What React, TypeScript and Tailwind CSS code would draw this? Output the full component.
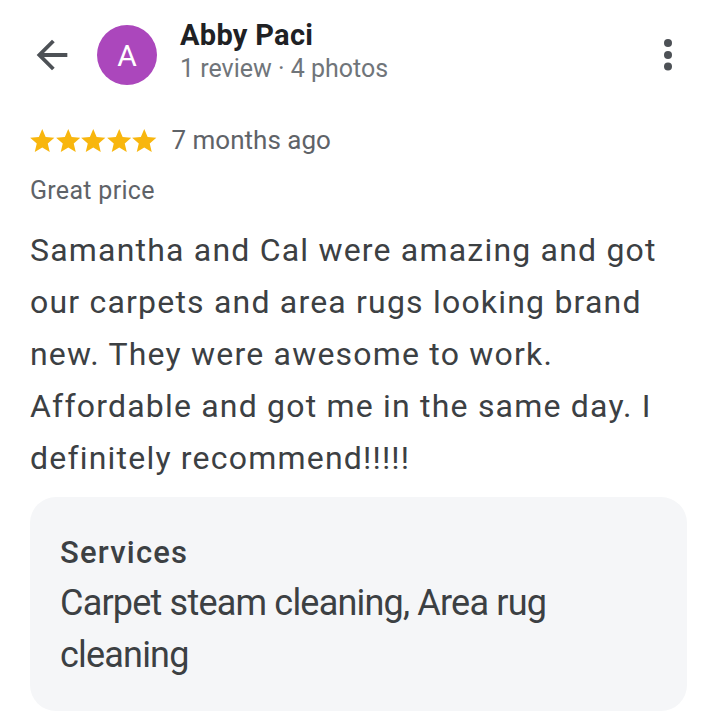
const bodyLines = [
  "Samantha and Cal were amazing and got",
  "our carpets and area rugs looking brand",
  "new. They were awesome to work.",
  "Affordable and got me in the same day. I",
  "definitely recommend!!!!!",
];

function Star() {
  return (
    <svg className="h-[23px] w-[24.5px]" viewBox="2 2 20 19" fill="#f8b60e" aria-hidden="true">
      <path d="M12 17.27 18.18 21l-1.64-7.03L22 9.24l-7.19-.61L12 2 9.19 8.63 2 9.24l5.46 4.73L5.82 21z" />
    </svg>
  );
}

export default function App() {
  return (
    <div className="min-h-[720px] w-[717px] bg-white font-['Roboto',sans-serif]">
      <div className="flex h-[85px] items-start pl-[29px] pr-[44px] pt-[17px]">
        <svg className="mt-[15px] h-[46px] w-[46px] text-[#4d5156]" viewBox="0 0 24 24" fill="currentColor" aria-hidden="true">
          <path d="M20 11H7.83l5.59-5.59L12 4l-8 8 8 8 1.41-1.41L7.83 13H20v-2z" />
        </svg>
        <div className="ml-[22px] mt-[8px] flex h-[60px] w-[60px] items-center justify-center rounded-full bg-[#ab47bc] text-[30px] text-white">
          A
        </div>
        <div className="ml-[23px] flex-1">
          <div className="text-[29px] font-bold leading-[36px] tracking-[0.3px] text-[#202124]">Abby Paci</div>
          <div className="text-[25px] leading-[32px] text-[#70757a]">1 review · 4 photos</div>
        </div>
        <svg className="mt-[22px] h-[32px] w-[10px] text-[#4d5156]" viewBox="0 0 10 32" fill="currentColor" aria-hidden="true">
          <circle cx="5" cy="4" r="4" />
          <circle cx="5" cy="16" r="4" />
          <circle cx="5" cy="27.5" r="4" />
        </svg>
      </div>

      <div className="px-[30px]">
        <div className="mt-[39px] flex h-[32px] items-center">
          <div className="flex gap-[1px]">
            <Star />
            <Star />
            <Star />
            <Star />
            <Star />
          </div>
          <span className="ml-[15px] text-[26px] leading-[32px] text-[#5f6368]">7 months ago</span>
        </div>
        <div className="mt-[20px] text-[25px] leading-[30px] tracking-[0.3px] text-[#5f6368]">Great price</div>
        <div className="mt-[18px] text-[32px] leading-[52px] tracking-[1.2px] text-[#3c4043]">
          {bodyLines.map((line, i) => (
            <div key={i} className="whitespace-nowrap">
              {line}
            </div>
          ))}
        </div>

        <div className="mt-[13px] rounded-[26px] bg-[#f5f6f8] px-[30px] pb-[30px] pt-[36px]">
          <div className="text-[31px] font-medium leading-[40px] tracking-[1.2px] text-[#3c4043]">Services</div>
          <div className="mt-[4px] text-[36px] leading-[52px] tracking-[-0.8px] text-[#3c4043]">
            <div>Carpet steam cleaning, Area rug</div>
            <div>cleaning</div>
          </div>
        </div>
      </div>
    </div>
  );
}
